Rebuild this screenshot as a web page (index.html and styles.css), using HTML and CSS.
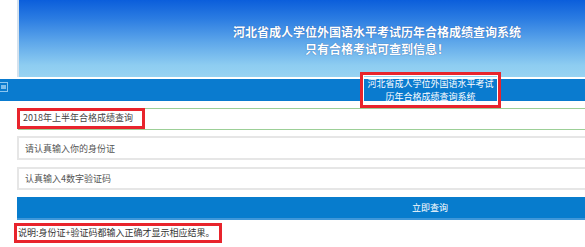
FILE: index.html
```html
<!DOCTYPE html>
<html lang="zh-CN">
<head>
<meta charset="utf-8">
<title>河北省成人学位外国语水平考试历年合格成绩查询系统</title>
<link rel="stylesheet" href="styles.css">
</head>
<body>
<div class="page">
  <header class="banner">
    <div class="banner-text">
      <div>河北省成人学位外国语水平考试历年合格成绩查询系统</div>
      <div>只有合格考试可查到信息！</div>
    </div>
  </header>
  <nav class="bar">
    <span class="mini-btn"><span class="mini-inner"></span></span>
    <div class="bar-title">
      <div>河北省成人学位外国语水平考试</div>
      <div>历年合格成绩查询系统</div>
    </div>
  </nav>
  <form class="form">
    <div class="row row-select">
      <span class="mark mark-select">2018年上半年合格成绩查询</span>
    </div>
    <div class="row row-input"><span class="ph">请认真输入你的身份证</span></div>
    <div class="row row-input row-input2"><span class="ph">认真输入4数字验证码</span></div>
    <div class="btn">立即查询</div>
    <div class="note"><span class="mark mark-note">说明:身份证+验证码都输入正确才显示相应结果。</span></div>
  </form>
</div>
</body>
</html>
```
FILE: styles.css
```css
html, body {
  margin: 0;
  padding: 0;
  background: #fff;
  overflow: hidden;
}
body {
  width: 585px;
  height: 247px;
  font-family: "Noto Sans CJK SC", "Noto Sans", sans-serif;
}
.page {
  width: 585px;
  overflow: hidden;
}
.banner {
  margin-left: 17px;
  height: 77px;
  border-left: 2px solid #d4e2ee;
  background: linear-gradient(180deg, #0b5edb 0%, #2c7de2 25%, #5ea7ea 55%, #8ecdf1 85%, #97d3f2 100%);
  box-sizing: border-box;
  padding-top: 23px;
  padding-left: 150px;
  text-align: center;
  white-space: nowrap;
}
.banner-text {
  color: #fff;
  font-weight: bold;
  font-size: 12px;
  line-height: 17px;
  text-shadow: 0 0 1px rgba(20, 60, 140, 0.8);
}
.bar {
  margin-top: 2px;
  height: 22px;
  background: #0a7bcf;
  display: flex;
  align-items: center;
  position: relative;
}
.mini-btn {
  position: absolute;
  left: -2px;
  top: 3px;
  width: 10px;
  height: 10px;
  border: 1px solid #8cc6ef;
  box-sizing: border-box;
  display: flex;
  align-items: center;
  justify-content: center;
}
.mini-inner {
  width: 5px;
  height: 4px;
  background: #7fbdea;
}
.bar-title {
  margin-left: 360px;
  width: 141px;
  height: 36px;
  box-sizing: border-box;
  border: 3px solid #e8242c;
  box-shadow: inset 0 0 0 1px #fff;
  display: flex;
  flex-direction: column;
  justify-content: center;
  align-items: center;
  color: #fff;
  font-size: 9px;
  line-height: 13px;
  white-space: nowrap;
}
.form {
  margin: 0 0 0 17px;
  padding-top: 7px;
  font-size: 9px;
}
.row {
  box-sizing: border-box;
  display: flex;
  align-items: center;
}
.row-select {
  height: 22px;
  border: 1px solid #9ccf97;
  border-right: none;
  margin-left: 1px;
}
.mark {
  display: inline-block;
  box-sizing: border-box;
  border: 3px solid #e8242c;
  color: #333;
  line-height: 14px;
  white-space: nowrap;
}
.mark-select {
  margin-left: -2px;
  margin-top: -1px;
  width: 128px;
  height: 21px;
  padding-left: 3px;
  color: #444;
}
.row-input {
  margin-top: 6px;
  height: 24px;
  border: 2px solid #e6e6e6;
  border-right: none;
  padding-left: 6px;
  color: #555;
}
.row-input2 {
  margin-top: 7px;
  height: 23px;
}
.btn {
  margin-top: 7px;
  height: 23px;
  box-sizing: border-box;
  background: #077ccd;
  border-bottom: 2px solid #3f97d9;
  color: #fff;
  padding-left: 258px;
  text-align: center;
  line-height: 21px;
  font-size: 9px;
}
.note {
  margin-top: 3px;
  margin-left: -3px;
}
.mark-note {
  height: 20px;
  padding: 0 4px 0 1px;
  line-height: 14px;
  color: #333;
}
```
